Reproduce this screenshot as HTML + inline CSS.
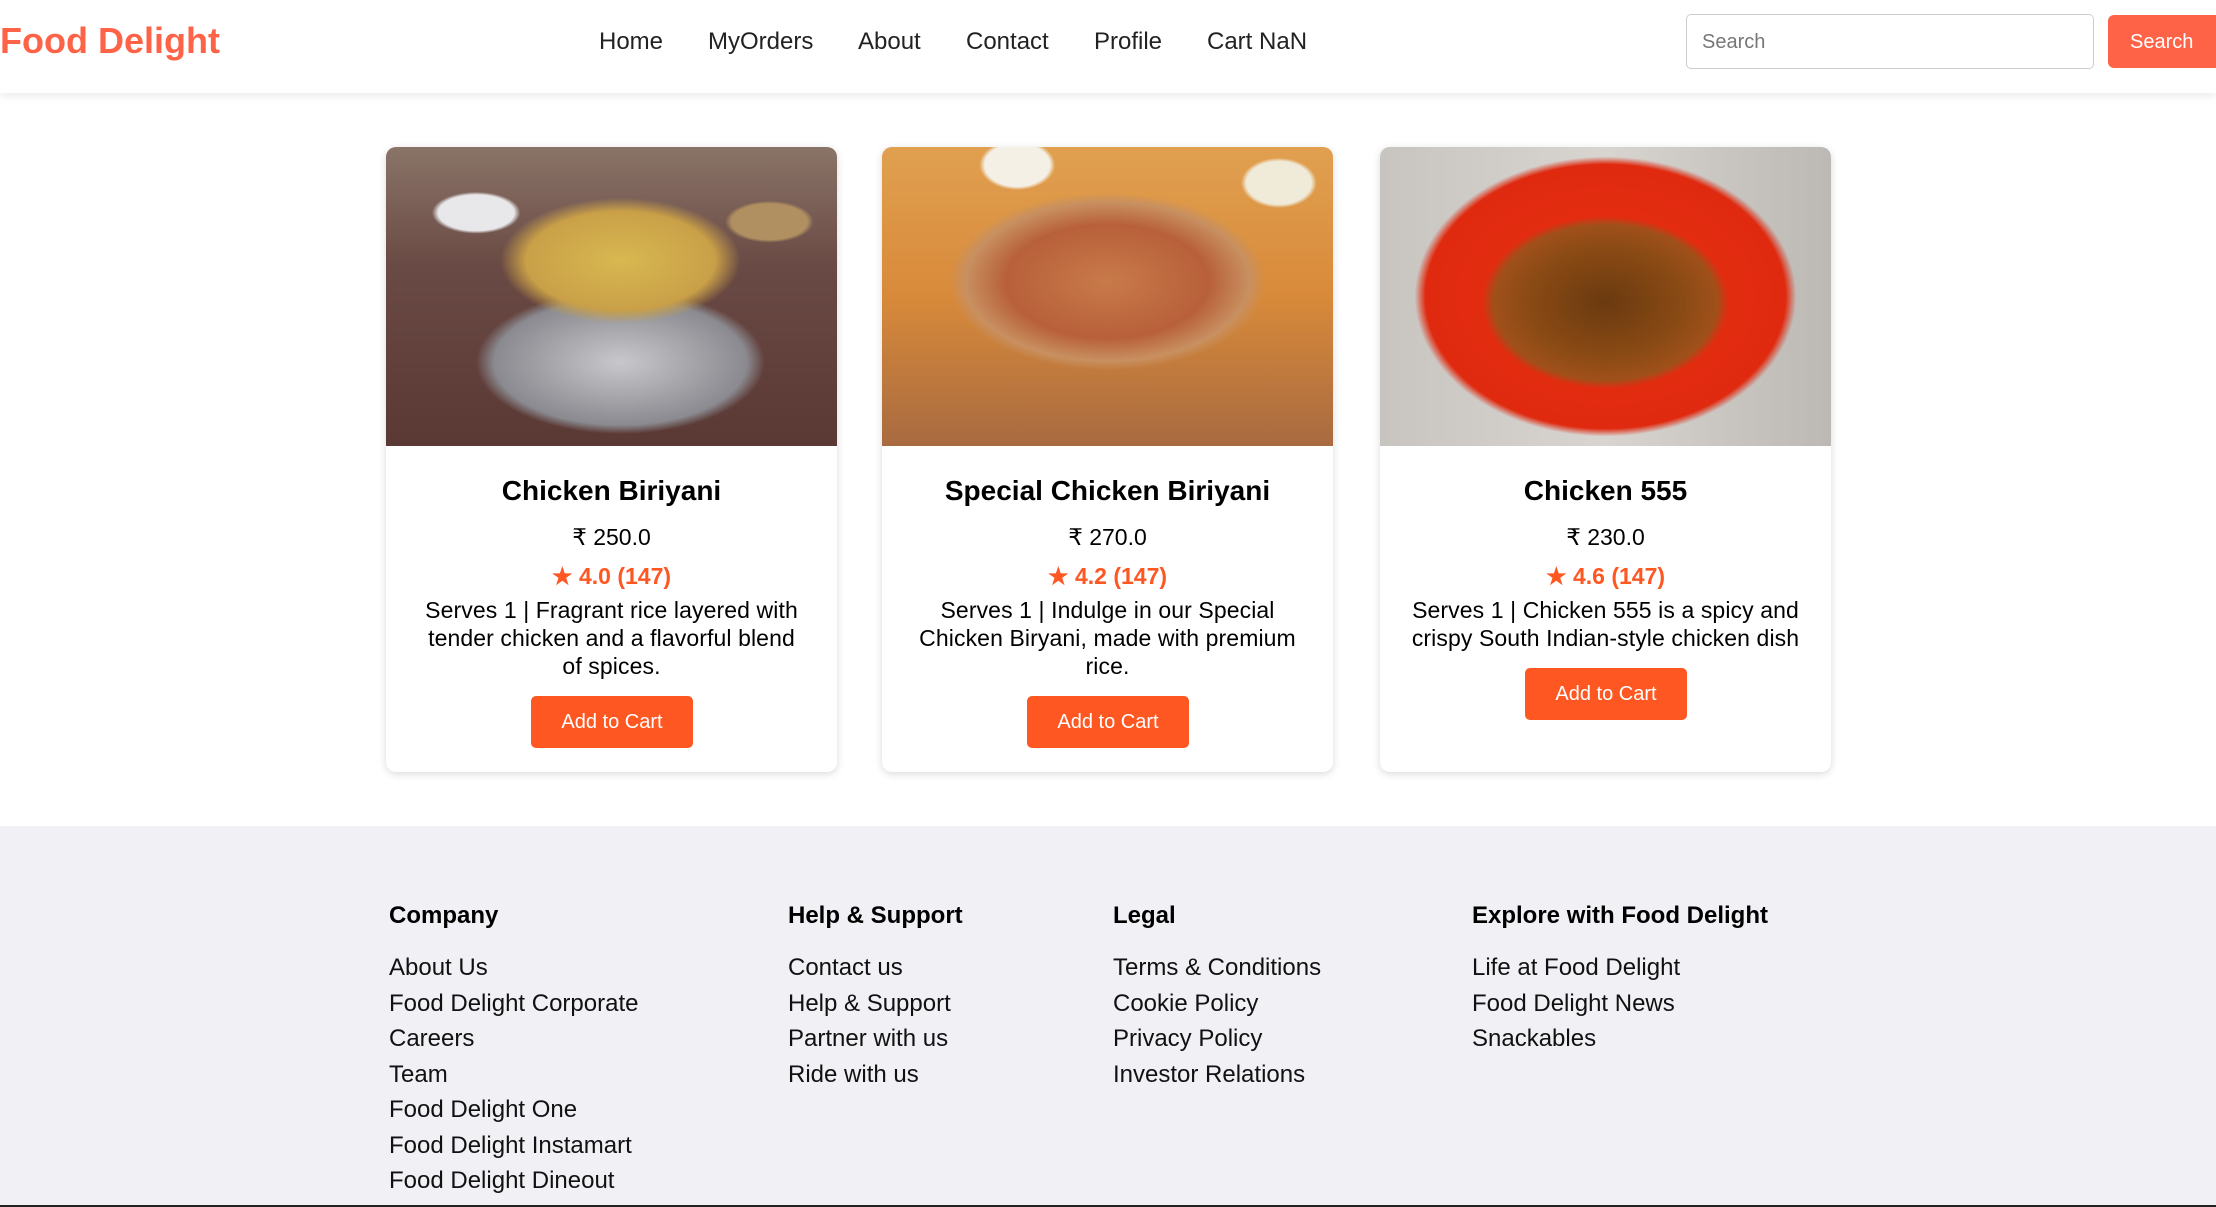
<!DOCTYPE html>
<html><head><meta charset="utf-8"><style>
*{box-sizing:border-box;margin:0;padding:0}
body{width:2216px;height:1207px;overflow:hidden;background:#fff;font-family:"Liberation Sans",Arial,sans-serif;color:#000;position:relative}
.hdr{position:absolute;left:0;top:0;width:2216px;height:93px;background:#fff;box-shadow:0 3px 8px rgba(0,0,0,.08)}
.logo{position:absolute;left:0;top:20px;font-size:36px;font-weight:bold;color:#ff6347}
.nav{position:absolute;top:28px;font-size:24px;color:#222}
.sinp{position:absolute;left:1686px;top:14px;width:408px;height:55px;border:1.5px solid #ccc;border-radius:5px;font-size:20px;color:#777;padding:16px 15px}
.sbtn{position:absolute;left:2108px;top:15px;width:115px;height:53px;background:#ff6347;border-radius:6px;color:#fff;font-size:20px;padding:16px 22px}
.card{position:absolute;top:147px;width:451px;height:625px;border-radius:10px;background:#fff;box-shadow:0 2px 8px rgba(0,0,0,.15);overflow:hidden;text-align:center}
.img{height:299px;width:100%}
.t{position:absolute;left:0;width:100%;top:328px;font-size:28px;font-weight:bold}
.p{position:absolute;left:0;width:100%;top:377px;font-size:23px}
.r{position:absolute;left:0;width:100%;top:416px;font-size:23px;font-weight:bold;color:#ff5722}
.d{position:absolute;left:0;width:451px;top:449px;font-size:23px;line-height:28px;letter-spacing:.1px;white-space:nowrap}
.b{position:absolute;left:145px;width:162px;height:52px;background:#ff5722;border-radius:5px;color:#fff;font-size:20px;line-height:52px}
.ft{position:absolute;left:0;top:826px;width:2216px;height:381px;background:#f0f0f5;border-bottom:2px solid #222}
.col{position:absolute;top:76px}
.col h4{font-size:24px;font-weight:bold;height:48px;line-height:28px}
.col div{font-size:24px;line-height:35.5px;color:#111}
</style></head><body>
<div class="hdr">
<div class="logo">Food Delight</div>
<div class="nav" style="left:599px">Home</div>
<div class="nav" style="left:708px">MyOrders</div>
<div class="nav" style="left:858px">About</div>
<div class="nav" style="left:966px">Contact</div>
<div class="nav" style="left:1094px">Profile</div>
<div class="nav" style="left:1207px">Cart NaN</div>
<div class="sinp">Search</div>
<div class="sbtn">Search</div>
</div>

<div class="card" style="left:386px">
<div class="img" style="background:radial-gradient(ellipse 38% 30% at 52% 38%,#d8b850 0%,#c9a048 55%,transparent 70%),radial-gradient(ellipse 40% 30% at 52% 72%,#c8c8cc 0%,#8a8a90 70%,transparent 80%),radial-gradient(ellipse 14% 10% at 20% 22%,#e8e8ea 60%,transparent 70%),radial-gradient(ellipse 14% 10% at 85% 25%,#b09060 60%,transparent 70%),linear-gradient(180deg,#8a7468 0%,#6a4a44 40%,#5a3834 100%)"></div>
<div class="t">Chicken Biriyani</div>
<div class="p">₹ 250.0</div>
<div class="r">★ 4.0 (147)</div>
<div class="d">Serves 1 | Fragrant rice layered with<br>tender chicken and a flavorful blend<br>of spices.</div>
<div class="b" style="top:549px">Add to Cart</div>
</div>

<div class="card" style="left:882px">
<div class="img" style="background:radial-gradient(ellipse 45% 38% at 50% 45%,#c87a4a 0%,#b8603a 50%,#c89060 70%,transparent 78%),radial-gradient(ellipse 12% 12% at 88% 12%,#f0ead8 60%,transparent 70%),radial-gradient(ellipse 12% 12% at 30% 6%,#f4f0e6 60%,transparent 70%),linear-gradient(180deg,#e0a050 0%,#d88a3a 50%,#a86a40 100%)"></div>
<div class="t">Special Chicken Biriyani</div>
<div class="p">₹ 270.0</div>
<div class="r">★ 4.2 (147)</div>
<div class="d">Serves 1 | Indulge in our Special<br>Chicken Biryani, made with premium<br>rice.</div>
<div class="b" style="top:549px">Add to Cart</div>
</div>

<div class="card" style="left:1380px">
<div class="img" style="background:radial-gradient(ellipse 38% 40% at 50% 52%,#6a3a10 0%,#8a4a14 45%,#a0501a 65%,transparent 72%),radial-gradient(ellipse 47% 52% at 50% 50%,#e83010 0%,#e02a10 85%,transparent 90%),linear-gradient(90deg,#c8c4c0,#d8d4d0 50%,#bcb8b4)"></div>
<div class="t">Chicken 555</div>
<div class="p">₹ 230.0</div>
<div class="r">★ 4.6 (147)</div>
<div class="d">Serves 1 | Chicken 555 is a spicy and<br>crispy South Indian-style chicken dish</div>
<div class="b" style="top:521px">Add to Cart</div>
</div>

<div class="ft">
<div class="col" style="left:389px"><h4>Company</h4><div>About Us</div><div>Food Delight Corporate</div><div>Careers</div><div>Team</div><div>Food Delight One</div><div>Food Delight Instamart</div><div>Food Delight Dineout</div></div>
<div class="col" style="left:788px"><h4>Help &amp; Support</h4><div>Contact us</div><div>Help &amp; Support</div><div>Partner with us</div><div>Ride with us</div></div>
<div class="col" style="left:1113px"><h4>Legal</h4><div>Terms &amp; Conditions</div><div>Cookie Policy</div><div>Privacy Policy</div><div>Investor Relations</div></div>
<div class="col" style="left:1472px"><h4>Explore with Food Delight</h4><div>Life at Food Delight</div><div>Food Delight News</div><div>Snackables</div></div>
</div>
</body></html>
